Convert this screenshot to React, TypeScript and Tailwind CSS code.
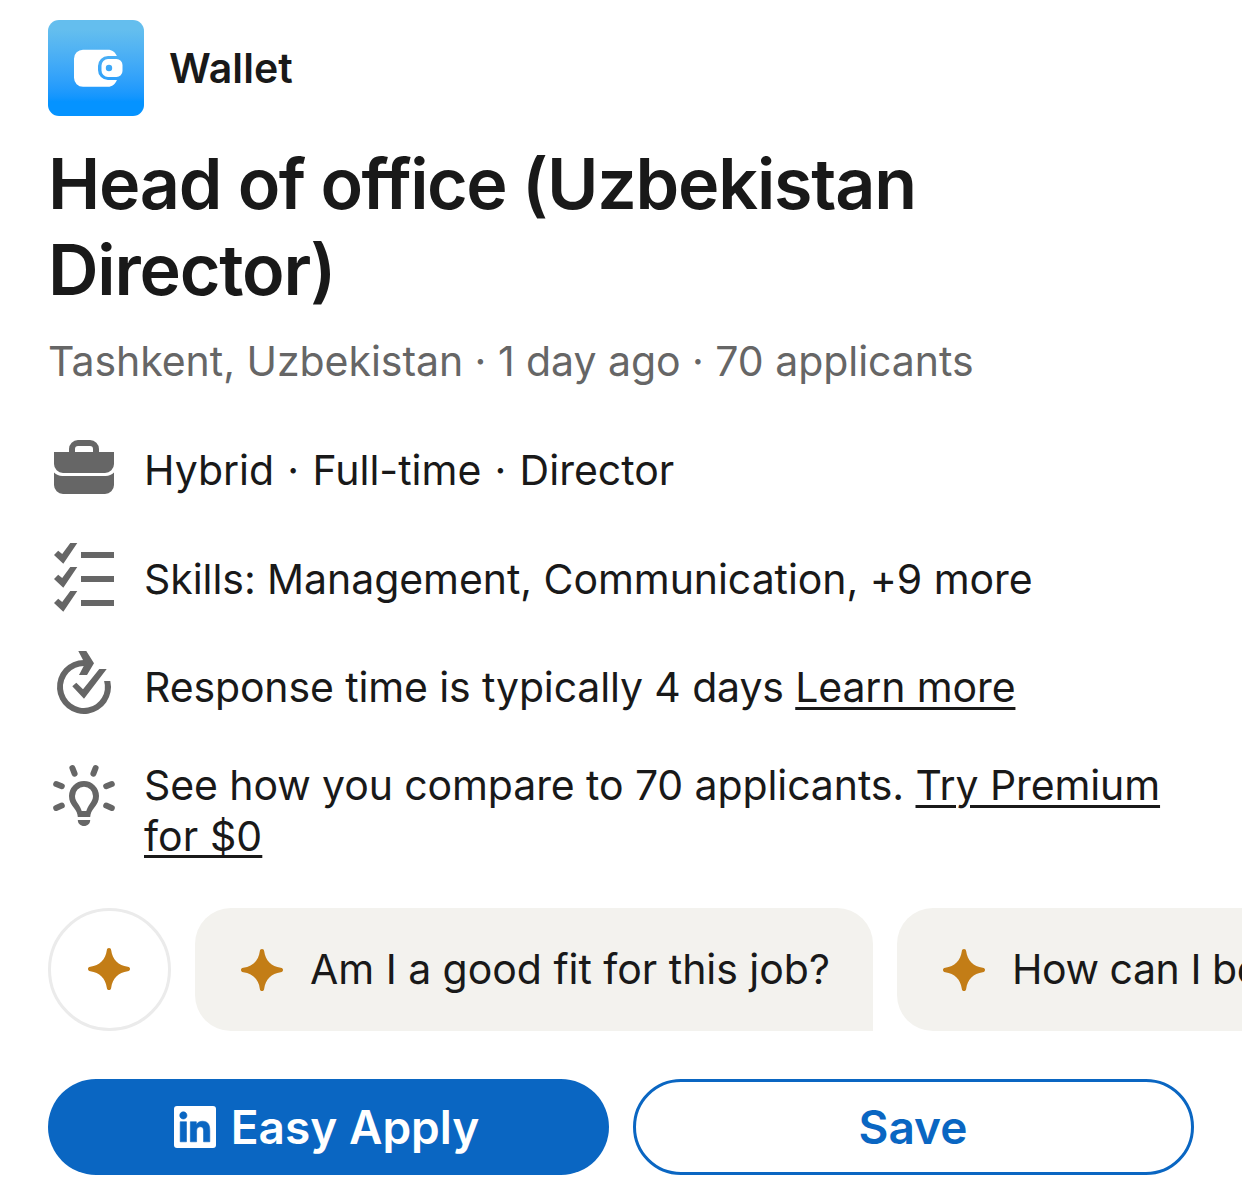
import React from "react";

function Star() {
  return (
    <svg viewBox="0 0 42 42" className="size-[42px] shrink-0" fill="#c37d16">
      <path d="M21 0c1.300 0 2 .8 2.200 2.300C24.300 11.500 30.500 17.700 39.700 18.800 41.200 19 42 19.700 42 21s-.8 2-2.300 2.200C30.500 24.300 24.300 30.500 23.200 39.700 23 41.200 22.300 42 21 42s-2-.8-2.200-2.300C17.700 30.500 11.500 24.300 2.300 23.200.8 23 0 22.300 0 21s.8-2 2.300-2.200C11.500 17.700 17.700 11.500 18.800 2.300 19 .8 19.700 0 21 0z" />
    </svg>
  );
}

function Icon({ children }: { children: React.ReactNode }) {
  return (
    <svg viewBox="0 0 72 72" className="size-[72px] shrink-0" fill="#666">
      {children}
    </svg>
  );
}

function WalletLogo() {
  return (
    <div className="size-24 rounded-[11px] bg-linear-to-b from-[#64beee] from-10% to-[#0593ff] to-85%">
      <svg viewBox="0 0 96 96" className="size-24" fill="#fff">
        <path d="M35 29.7h25c4 0 7.300 2.300 8.900 6.300H60a10 10 0 0 0-10 10v4a10 10 0 0 0 10 10h8.900c-1.600 4-4.900 6.800-8.900 6.800H35a9 9 0 0 1-9-9V38.700a9 9 0 0 1 9-9z" />
        <path fillRule="evenodd" d="M60 39h8.500a6 6 0 0 1 6 6v6a6 6 0 0 1-6 6H60a6.500 6.500 0 0 1-6.500-6.500v-5A6.500 6.500 0 0 1 60 39zM61 44.800a3.200 3.200 0 1 0 0 6.400a3.200 3.200 0 1 0 0-6.400z" />
      </svg>
    </div>
  );
}

function LinkedInLogo() {
  return (
    <svg viewBox="0 0 24 24" className="size-[42px]">
      <rect width="24" height="24" rx="1.700" fill="#fff" />
      <path
        d="M20.447 20.452h-3.554v-5.569c0-1.328-.027-3.037-1.852-3.037-1.853 0-2.136 1.445-2.136 2.939v5.667H9.351V9h3.414v1.561h.046c.477-.9 1.637-1.850 3.370-1.850 3.601 0 4.267 2.370 4.267 5.455v6.286zM5.337 7.433c-1.144 0-2.063-.926-2.063-2.065 0-1.138.92-2.063 2.063-2.063 1.140 0 2.064.925 2.064 2.063 0 1.139-.925 2.065-2.064 2.065zm1.782 13.019H3.555V9h3.564v11.452z"
        fill="#0a66c2"
        stroke="#0a66c2"
        strokeWidth="0.350"
      />
    </svg>
  );
}

const link = "underline decoration-3 underline-offset-[5px]";

export default function App() {
  return (
    <main className="h-[1202px] w-[1242px] overflow-hidden bg-white px-12 pt-5 font-['Inter',sans-serif] text-[#191919] [font-feature-settings:'calt'_0]">
      <header className="flex h-24 items-center gap-[25px]">
        <WalletLogo />
        <span className="pt-0.5 text-[41px] font-semibold tracking-[0.1px]">Wallet</span>
      </header>
      <h1 className="mt-[25px] text-[70px] leading-[86px] font-semibold tracking-[-1.2px] whitespace-nowrap">
        Head <span className="tracking-[-1.6px]">of office </span>(Uzbekistan
        <br />
        Director)
      </h1>
      <p className="mt-[22px] text-[41px] leading-[52px] tracking-[-0.04px] whitespace-nowrap text-[#666]">
        Tashkent, Uzbekistan · 1 day ago · 70 applicants
      </p>
      <div className="text-[41px] leading-[52px] whitespace-nowrap">
        <div className="mt-[47px] flex items-center gap-6">
          <Icon>
            <path fillRule="evenodd" d="M21 18v-3a9 9 0 0 1 9-9h12a9 9 0 0 1 9 9v3h15v12a9 9 0 0 1-9 9H15a9 9 0 0 1-9-9V18zM27 18h18v-3a3 3 0 0 0-3-3H30a3 3 0 0 0-3 3z" />
            <path d="M6 38.600A12 12 0 0 0 15 42H57a12 12 0 0 0 9-3.400V51a9 9 0 0 1-9 9H15a9 9 0 0 1-9-9z" />
          </Icon>
          <p className="[word-spacing:1.7px]">Hybrid · Full-time · Director</p>
        </div>
        <div className="mt-[37px] flex items-center gap-6">
          <Icon>
            {[0, 24, 48].map((y) => (
              <g key={y} transform={`translate(0 ${y})`}>
                <path d="M6 12l4.200-4.200 4 3.200L22.300 0H29.300L15.300 20.700z" />
                <path d="M33 9h33v6H33z" />
              </g>
            ))}
          </Icon>
          <p className="tracking-[-0.06px]">Skills: Management, Communication, +9 more</p>
        </div>
        <div className="mt-[36px] flex items-center gap-6">
          <Icon>
            <path d="M62.300 30A27 27 0 1 1 36 9v6A21 21 0 1 0 56.100 30z" />
            <path d="M30.300 0h8L46 12.200 39 24h-8l4.700-9L35 9z" />
            <path d="M24.300 35.300l4-3.600 6.700 6.500L51.300 18h7.400L36 47.700z" />
          </Icon>
          <p className="tracking-[-0.13px]">
            Response time is typically 4 days <a className={link}>Learn more</a>
          </p>
        </div>
        <div className="mt-[36px] flex items-start gap-6">
          <Icon>
            <path fillRule="evenodd" d="M36 22a15 15 0 0 1 15 15c0 5-2 8.500-5 12-2.500 3-3.500 5.500-3.800 9H29.800c-.3-3.500-1.300-6-3.800-9-3-3.500-5-7-5-12a15 15 0 0 1 15-15zM36 27.800a9 9 0 0 0-9 9.200c0 3 1.200 5.300 3.200 8 1.600 2.200 2.800 4.500 3.500 7h4.600c.7-2.500 1.900-4.800 3.500-7 2-2.700 3.200-5 3.200-8a9 9 0 0 0-9-9.200z" />
            <path d="M29.800 61h12.400c0 3.500-2.700 6-6.200 6s-6.200-2.500-6.200-6z" />
            <path d="M24.400 9l2.200 5.600M47.600 9l-2.200 5.600M8.200 25l5.600 2.200M63.800 25l-5.600 2.200M8.200 49l5.600-2.400M63.800 49l-5.600-2.400" stroke="#666" strokeWidth="6" strokeLinecap="round" />
          </Icon>
          <p className="pt-px leading-[51px] tracking-[-0.1px]">
            See how you compare to 70 applicants. <a className={link}>Try Premium</a>
            <br />
            <a className="tracking-[0.1px] underline decoration-3 underline-offset-[4px] [text-decoration-skip-ink:none]">for $0</a>
          </p>
        </div>
      </div>
      <div className="mt-[46px] flex h-[123px] gap-6 text-[41px] whitespace-nowrap">
        <div className="flex w-[123px] shrink-0 items-center justify-center rounded-full border-3 border-[#ebebeb] pr-0.5 pb-px">
          <Star />
        </div>
        <div className="flex w-[678px] shrink-0 items-center gap-[27px] rounded-[36px] rounded-br-none bg-[#f3f2ee] pl-[46px] tracking-[-0.03px]">
          <Star />
          Am I a good fit for this job?
        </div>
        <div className="flex w-[678px] shrink-0 items-center gap-[27px] rounded-[36px] rounded-br-none bg-[#f3f2ee] pl-[46px] tracking-[-0.45px]">
          <Star />
          How can I be
        </div>
      </div>
      <div className="mt-12 flex h-24 gap-6 text-[46px] font-semibold">
        <button className="flex w-[561px] items-center justify-center gap-[15px] rounded-full bg-[#0a66c2] pr-1 text-white">
          <LinkedInLogo />
          Easy Apply
        </button>
        <button className="flex w-[561px] items-center justify-center rounded-full border-3 border-[#0a66c2] pr-px text-[#0a66c2]">
          Save
        </button>
      </div>
    </main>
  );
}
